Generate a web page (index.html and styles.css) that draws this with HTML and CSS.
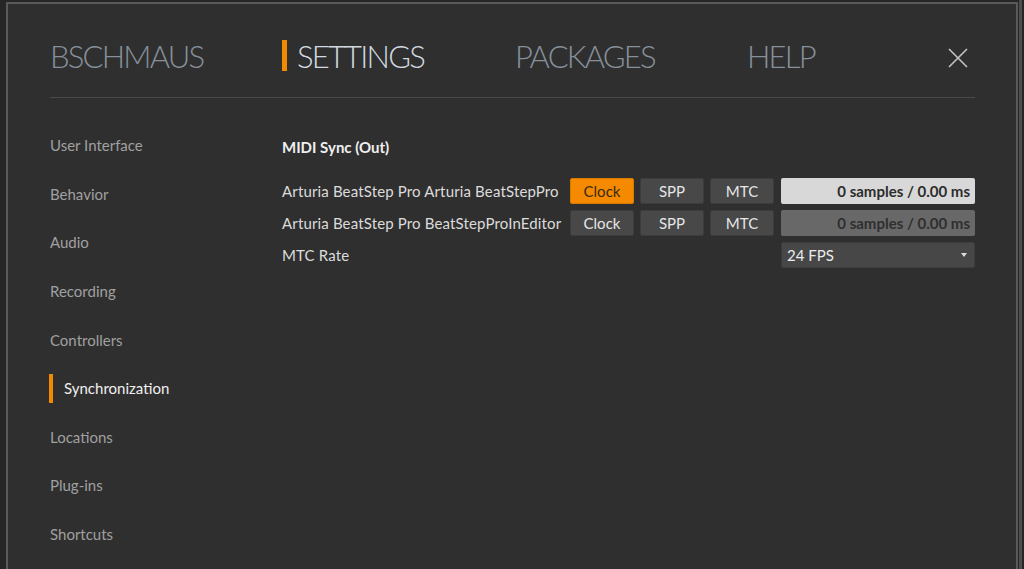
FILE: index.html
```html
<!DOCTYPE html>
<html>
<head>
<meta charset="utf-8">
<link rel="stylesheet" href="styles.css">
</head>
<body>
<div class="app">
  <div class="dialog">
    <header class="tabs">
      <div class="tab">BSCHMAUS</div>
      <div class="tab active"><span class="bar"></span>SETTINGS</div>
      <div class="tab">PACKAGES</div>
      <div class="tab">HELP</div>
      <div class="close">
        <svg width="20" height="20" viewBox="0 0 20 20"><path d="M1 1L19 19M19 1L1 19" stroke="#c4c4c4" stroke-width="1.6" fill="none"/></svg>
      </div>
    </header>
    <div class="body">
      <nav class="sidebar">
        <div class="item">User Interface</div>
        <div class="item">Behavior</div>
        <div class="item">Audio</div>
        <div class="item">Recording</div>
        <div class="item">Controllers</div>
        <div class="item active"><span class="bar"></span>Synchronization</div>
        <div class="item">Locations</div>
        <div class="item">Plug-ins</div>
        <div class="item">Shortcuts</div>
      </nav>
      <main class="content">
        <h2 class="section-title">MIDI Sync (Out)</h2>
        <div class="row">
          <div class="label">Arturia BeatStep Pro Arturia BeatStepPro</div>
          <div class="btn on">Clock</div>
          <div class="btn">SPP</div>
          <div class="btn">MTC</div>
          <div class="field light">0 samples / 0.00 ms</div>
        </div>
        <div class="row">
          <div class="label">Arturia BeatStep Pro BeatStepProInEditor</div>
          <div class="btn">Clock</div>
          <div class="btn">SPP</div>
          <div class="btn">MTC</div>
          <div class="field dim">0 samples / 0.00 ms</div>
        </div>
        <div class="row last">
          <div class="label wide">MTC Rate</div>
          <div class="select"><span>24 FPS</span><span class="arrow"></span></div>
        </div>
      </main>
    </div>
  </div>
</div>
</body>
</html>
```

FILE: styles.css
```css
html, body {
  margin: 0;
  padding: 0;
  height: 100%;
  background: #262626;
  font-family: "Lato", "Noto Sans", sans-serif;
  overflow: hidden;
}
.app {
  height: 100%;
  padding: 2px 0 0 6px;
  box-sizing: border-box;
  background: linear-gradient(to right, #262626 0, #262626 1019px, #4e4e4e 1019px, #4e4e4e 1022px, #262626 1022px);
}
.dialog {
  width: 1012px;
  height: 567px;
  box-sizing: border-box;
  border: 2px solid #5a5a5a;
  border-bottom: none;
  background: #2f2f2f;
  padding: 0 41px 0 42px;
  overflow: hidden;
}
.tabs {
  display: grid;
  grid-template-columns: 232px 233px 232px 1fr auto;
  align-items: center;
  height: 93px;
  border-bottom: 1px solid #4a4a4a;
}
.tab {
  font-size: 31px;
  font-weight: 300;
  color: #87909a;
  letter-spacing: -1.8px;
  display: flex;
  align-items: center;
  padding-top: 10px;
}
.tab.active {
  color: #d2d9e0;
}
.tab .bar {
  display: inline-block;
  width: 5px;
  height: 31px;
  background: #f08a00;
  margin-right: 10px;
}
.close {
  display: flex;
  justify-content: flex-end;
  padding-right: 7px;
  padding-top: 14px;
}
.body {
  display: flex;
}
.sidebar {
  width: 232px;
  padding-top: 23px;
  display: flex;
  flex-direction: column;
}
.item {
  height: 48.6px;
  display: flex;
  align-items: center;
  font-size: 15px;
  color: #a0a0a0;
}
.item.active {
  color: #f0f0f0;
}
.item .bar {
  width: 4px;
  height: 29px;
  background: #f08a00;
  margin-right: 11px;
  margin-left: -1px;
}
.content {
  flex: 1;
  padding-top: 39px;
}
.section-title {
  margin: 0 0 21px 0;
  font-size: 15px;
  font-weight: 700;
  color: #f0f0f0;
  height: 20px;
  line-height: 20px;
}
.row {
  display: flex;
  align-items: center;
  height: 26px;
  margin-bottom: 6px;
}
.row.last {
  margin-top: 1px;
}
.label {
  width: 288px;
  font-size: 15px;
  letter-spacing: 0.15px;
  color: #dcdcdc;
  white-space: nowrap;
}
.label.wide {
  width: 499px;
}
.btn {
  width: 64px;
  height: 26px;
  box-sizing: border-box;
  margin-right: 6px;
  background: #484848;
  border: 1px solid #3c3c3c;
  border-radius: 2px;
  color: #e6e6e6;
  font-size: 15px;
  display: flex;
  align-items: center;
  justify-content: center;
}
.btn.on {
  background: #f58a00;
  border-color: #d97a00;
  color: #3a2a14;
}
.field {
  width: 194px;
  height: 26px;
  box-sizing: border-box;
  margin-left: 1px;
  border-radius: 2px;
  font-size: 15px;
  font-weight: 700;
  display: flex;
  align-items: center;
  justify-content: flex-end;
  padding-right: 5px;
}
.field.light {
  background: #d8d8d8;
  color: #2c2c2c;
}
.field.dim {
  background: #686868;
  color: #2f2f2f;
}
.select {
  width: 194px;
  height: 26px;
  box-sizing: border-box;
  background: #474747;
  border: 1px solid #3c3c3c;
  border-radius: 2px;
  color: #ececec;
  font-size: 15px;
  display: flex;
  align-items: center;
  justify-content: space-between;
  padding: 0 7px 0 5px;
}
.select .arrow {
  width: 0;
  height: 0;
  border-left: 3.5px solid transparent;
  border-right: 3.5px solid transparent;
  border-top: 4px solid #dcdcdc;
}
```
